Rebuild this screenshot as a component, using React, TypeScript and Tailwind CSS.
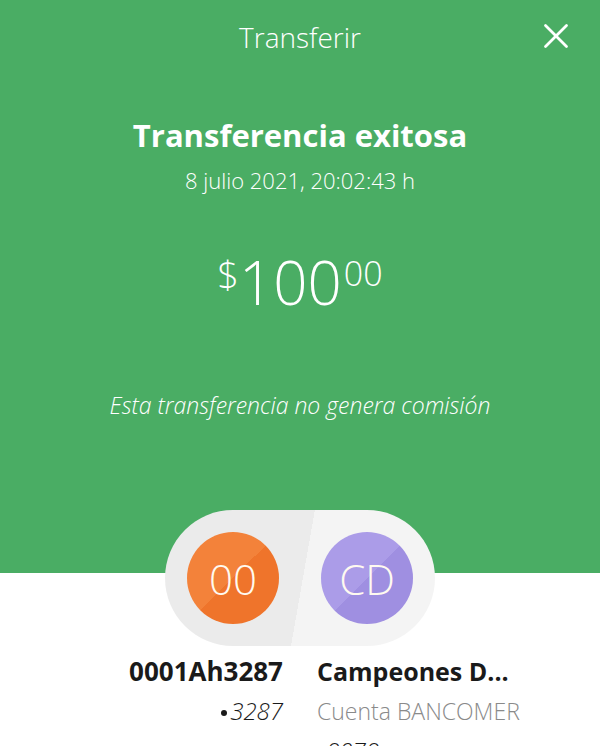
import { X } from "lucide-react"

const Avatar = ({ label, from, to }: { label: string, from: string, to: string }) => {
    return (
        <div
            className="w-[92px] h-[92px] rounded-full flex items-center justify-center text-[#fffaf0] text-[42px] font-light"
            style={{ background: `linear-gradient(135deg, ${from} 50%, ${to} 50%)` }}
        >
            {label}
        </div>
    )
}

const Masked = ({ digits }: { digits: string }) => {
    return (
        <p className="text-[24px] font-light text-[#1a1a1a] leading-[40px]">
            <span className="inline-block w-[6px] h-[6px] rounded-full bg-[#1a1a1a] align-middle mr-[3px] mb-[2px]"></span>
            <span className="italic">{digits}</span>
        </p>
    )
}

const App = () => {
    return (
        <div className="w-[600px] h-[746px] overflow-hidden bg-white font-['Open_Sans',sans-serif]">
            <section className="bg-[#4aad64] h-[573px] text-white flex flex-col items-center">
                <header className="relative w-full h-[74px] flex items-center justify-center">
                    <h1 className="text-[28px] font-light">Transferir</h1>
                    <button className="absolute right-[23px] top-[15px]">
                        <X size={42} strokeWidth={1.6} />
                    </button>
                </header>
                <h2 className="mt-[39px] text-[31px] font-bold leading-[44px]">Transferencia exitosa</h2>
                <p className="mt-[9px] text-[22px] font-light leading-[28px]">8 julio 2021, 20:02:43 h</p>
                <div className="mt-[58px] flex items-start font-light leading-none">
                    <span className="text-[38px] mt-[3px]">$</span>
                    <span className="text-[60px]">100</span>
                    <span className="text-[34px] mt-[4px] ml-[2px]">00</span>
                </div>
                <p className="mt-[79px] text-[23px] font-light italic leading-[28px]">Esta transferencia no genera comisión</p>
            </section>
            <div className="-mt-[63px] flex justify-center">
                <div className="w-[270px] h-[136px] rounded-full bg-[linear-gradient(100deg,#ebebeb_51%,#f4f4f4_51%)] flex items-center justify-between px-[22px]">
                    <Avatar label="00" from="#f3823a" to="#ef742b" />
                    <Avatar label="CD" from="#ab9ce8" to="#9f8fe1" />
                </div>
            </div>
            <div className="grid grid-cols-2 gap-x-[34px] mt-[5px]">
                <div className="text-right">
                    <p className="text-[26px] font-bold text-[#1a1a1a] leading-[40px]">0001Ah3287</p>
                    <Masked digits="3287" />
                </div>
                <div>
                    <p className="text-[25px] font-bold text-[#1a1a1a] leading-[40px]">Campeones D...</p>
                    <p className="text-[23px] font-light text-[#8a8a8a] leading-[40px]">Cuenta BANCOMER</p>
                    <Masked digits="8078" />
                </div>
            </div>
        </div>
    )
}

export default App
